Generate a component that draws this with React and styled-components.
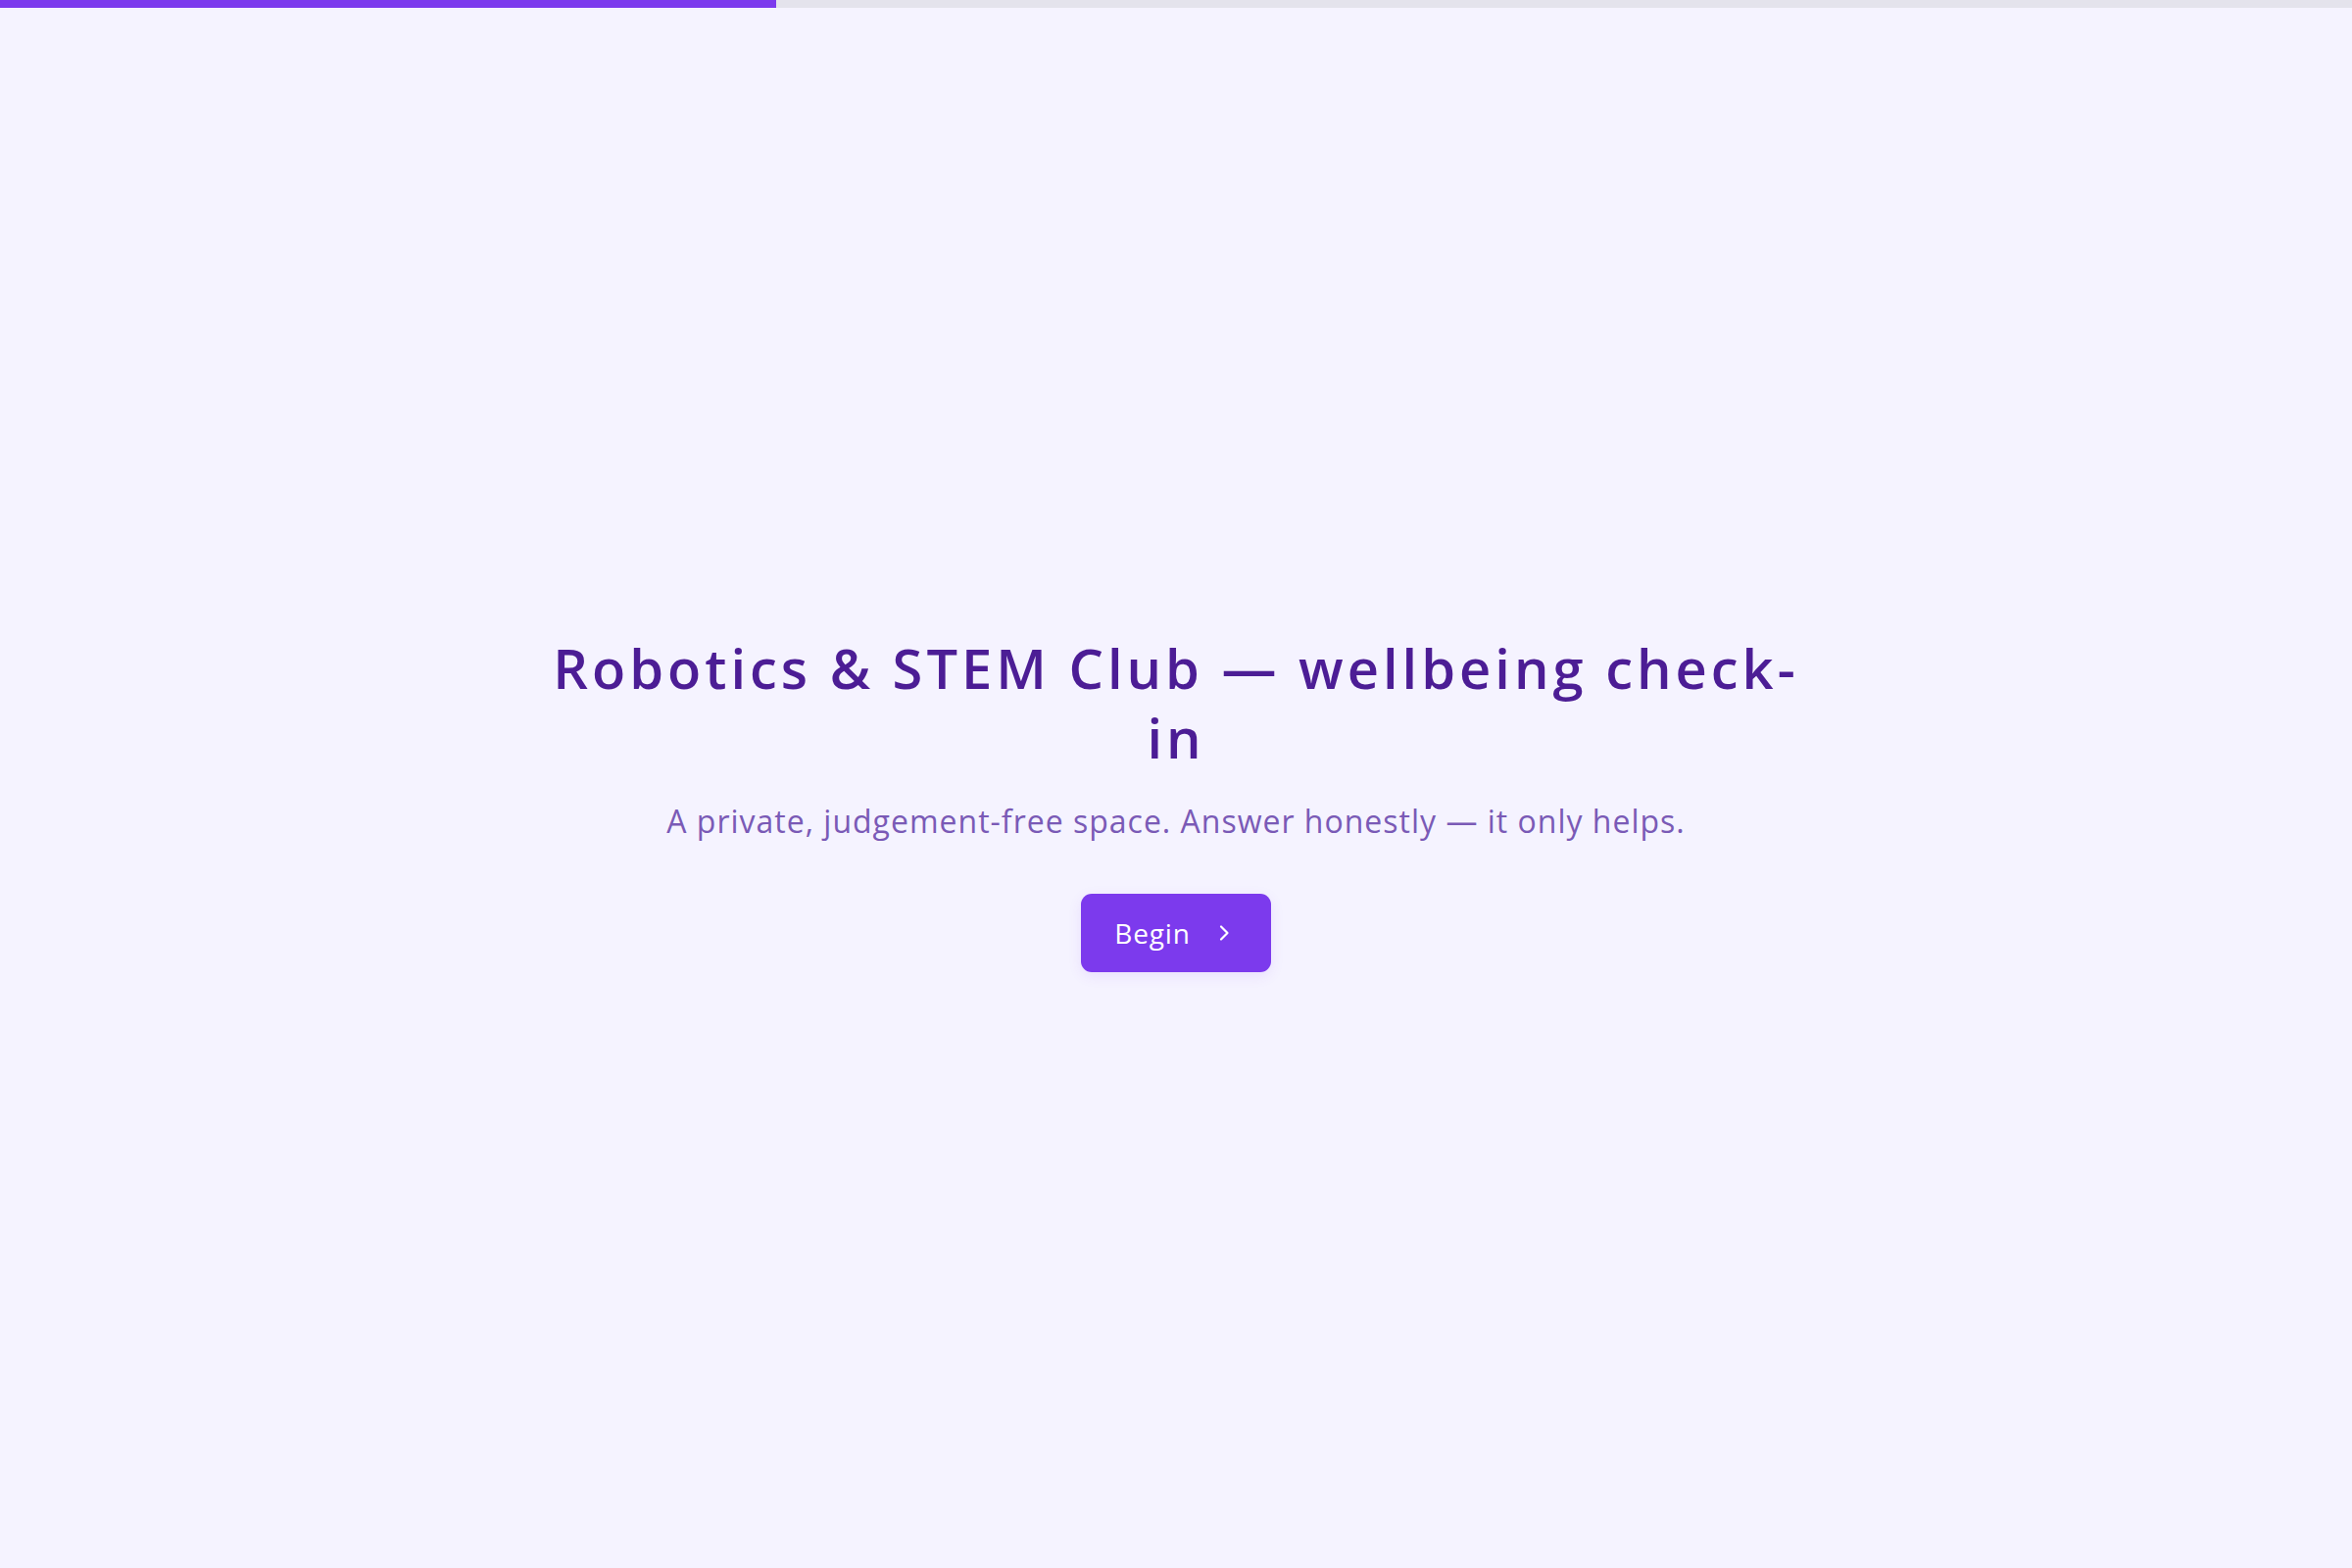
import React from "react";
import styled, { createGlobalStyle } from "styled-components";

const GlobalStyle = createGlobalStyle`
  *, *::before, *::after { box-sizing: border-box; }
  html, body { margin: 0; padding: 0; }
  body {
    background: #f5f3ff;
    font-family: "Open Sans", "Liberation Sans", sans-serif;
    -webkit-font-smoothing: antialiased;
  }
`;

const Page = styled.div`
  min-height: 100vh;
  display: flex;
  flex-direction: column;
  background: #f5f3ff;
`;

const ProgressTrack = styled.div`
  height: 8px;
  width: 100%;
  background: #e4e3ec;
`;

const ProgressFill = styled.div`
  height: 100%;
  background: #7c3aed;
`;

const Stage = styled.main`
  flex: 1;
  display: flex;
  align-items: center;
  justify-content: center;
  padding: 30px 24px 0;
`;

const Intro = styled.section`
  width: 100%;
  max-width: 1290px;
  display: flex;
  flex-direction: column;
  align-items: center;
  text-align: center;
`;

const Title = styled.h1`
  margin: 0;
  font-size: 56px;
  line-height: 71px;
  font-weight: 600;
  color: #4c1d95;
  letter-spacing: 4px;
`;

const Subtitle = styled.p`
  margin: 28px 0 0;
  font-size: 32px;
  line-height: 44px;
  font-weight: 400;
  color: #7a5ab6;
  letter-spacing: 1px;
`;

const BeginButton = styled.button`
  margin-top: 52px;
  display: inline-flex;
  align-items: center;
  gap: 22px;
  height: 80px;
  padding: 0 36px 0 34px;
  border: none;
  border-radius: 11px;
  background: #7c3aed;
  color: #ffffff;
  font-family: inherit;
  font-size: 28px;
  font-weight: 400;
  letter-spacing: 0.8px;
  cursor: pointer;
  box-shadow: 0 4px 14px rgba(124, 58, 237, 0.1);
`;

const Chevron = () => (
  <svg width="24" height="24" viewBox="0 0 24 24" fill="none" stroke="currentColor" strokeWidth="2.2" strokeLinecap="round" strokeLinejoin="round">
    <path d="M9 5.5l6.5 6.5-6.5 6.5" />
  </svg>
);

export default function App() {
  const progress = 33;
  return (
    <>
      <GlobalStyle />
      <Page>
        <ProgressTrack>
          <ProgressFill style={{ width: `${progress}%` }} />
        </ProgressTrack>
        <Stage>
          <Intro>
            <Title>Robotics &amp; STEM Club — wellbeing check-in</Title>
            <Subtitle>A private, judgement-free space. Answer honestly — it only helps.</Subtitle>
            <BeginButton>
              Begin
              <Chevron />
            </BeginButton>
          </Intro>
        </Stage>
      </Page>
    </>
  );
}
